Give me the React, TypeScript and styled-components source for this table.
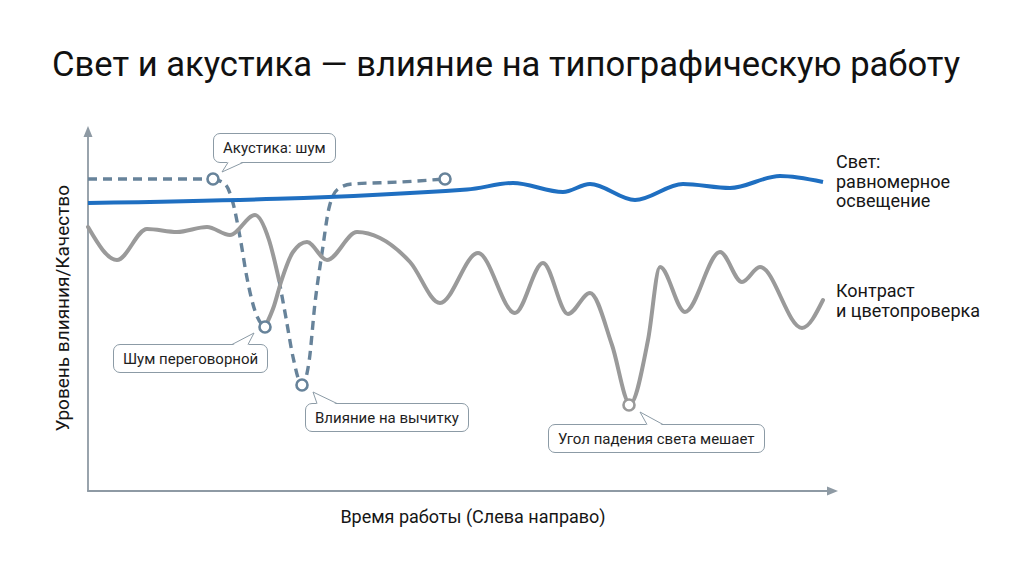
import React from 'react';
import styled, { createGlobalStyle } from 'styled-components';

const GlobalStyle = createGlobalStyle`
  html, body { margin: 0; padding: 0; background: #ffffff; }
  body { font-family: Roboto, "Noto Sans", "Liberation Sans", Arial, sans-serif; color: #151515; }
`;

type Pt = [number, number];

const sign = (v: number) => (v < 0 ? -1 : v > 0 ? 1 : 0);

function monotonePath(pts: Pt[]): string {
  const n = pts.length;
  if (n < 2) return '';
  const t: number[] = new Array(n).fill(0);
  for (let i = 1; i < n - 1; i++) {
    const [x0, y0] = pts[i - 1];
    const [x1, y1] = pts[i];
    const [x2, y2] = pts[i + 1];
    const h0 = x1 - x0;
    const h1 = x2 - x1;
    const s0 = (y1 - y0) / h0;
    const s1 = (y2 - y1) / h1;
    const p = (s0 * h1 + s1 * h0) / (h0 + h1);
    t[i] = (sign(s0) + sign(s1)) * Math.min(Math.abs(s0), Math.abs(s1), 0.5 * Math.abs(p)) || 0;
  }
  if (n > 2) {
    const a0 = pts[0];
    const a1 = pts[1];
    const h0 = a1[0] - a0[0];
    t[0] = h0 ? (3 * (a1[1] - a0[1]) / h0 - t[1]) / 2 : t[1];
    const b0 = pts[n - 2];
    const b1 = pts[n - 1];
    const h1 = b1[0] - b0[0];
    t[n - 1] = h1 ? (3 * (b1[1] - b0[1]) / h1 - t[n - 2]) / 2 : t[n - 2];
  } else {
    const s = (pts[1][1] - pts[0][1]) / (pts[1][0] - pts[0][0]);
    t[0] = s;
    t[1] = s;
  }
  let d = `M${pts[0][0]},${pts[0][1]}`;
  for (let i = 0; i < n - 1; i++) {
    const [x0, y0] = pts[i];
    const [x1, y1] = pts[i + 1];
    const dx = (x1 - x0) / 3;
    d += ` C${(x0 + dx).toFixed(2)},${(y0 + t[i] * dx).toFixed(2)} ${(x1 - dx).toFixed(2)},${(y1 - t[i + 1] * dx).toFixed(2)} ${x1},${y1}`;
  }
  return d;
}

const COLORS = {
  axis: '#8e9aa4',
  blue: '#1f6fc1',
  grey: '#9a9a9a',
  slate: '#67839a',
  border: '#8c9ba6',
};

const bluePts: Pt[] = [
  [88, 203], [467, 189.5], [513, 183], [563, 192], [590, 184], [635, 200],
  [683, 184], [730, 188], [780, 176], [823, 182],
];

const greyPart1: Pt[] = [
  [88, 227], [117, 260], [147, 229], [177, 232], [207, 227], [230, 235],
  [255, 215], [269, 240], [279, 280],
];

const greyPart2: Pt[] = [
  [265, 327], [274, 306], [281, 282], [293, 252], [307, 242], [327, 260],
  [357, 232], [380, 238], [410, 262], [440, 303], [478, 253], [515, 313],
  [543, 263], [568, 314], [590, 293], [612, 345], [630, 404], [648, 340],
  [660, 267], [685, 312], [720, 252], [742, 282], [760, 267], [802, 328],
  [823, 300],
];

const dashDive1: Pt[] = [
  [213, 179], [225, 184], [233, 203], [240, 237], [247, 278], [255, 311], [264, 327],
];

const dashDive2: Pt[] = [
  [279, 280], [286, 318], [293, 357], [302, 385], [309, 362], [315, 303],
  [322, 253], [329, 208], [338, 189], [352, 184], [400, 182], [445, 179],
];

const Page = styled.div`
  width: 1024px;
  height: 572px;
  overflow: hidden;
  display: flex;
  flex-direction: column;
`;

const Title = styled.h1`
  margin: 0;
  padding: 44px 0 0 52px;
  font-size: 34.6px;
  line-height: 40px;
  font-weight: 400;
  color: #111111;
  white-space: nowrap;
`;

const Figure = styled.figure`
  margin: 28px 0 0 0;
  display: flex;
  flex-direction: column;
`;

const PlotRow = styled.div`
  display: grid;
  grid-template-columns: 88px 936px;
  height: 392px;
`;

const YAxisCell = styled.div`
  display: flex;
  align-items: center;
  justify-content: flex-end;
  padding-right: 14px;
`;

const YAxisLabel = styled.span`
  writing-mode: vertical-rl;
  transform: rotate(180deg);
  font-size: 19px;
  line-height: 22px;
  white-space: nowrap;
  color: #161616;
`;

const Canvas = styled.div`
  position: relative;
  width: 936px;
  height: 392px;
`;

const ChartSvg = styled.svg`
  display: block;
  width: 936px;
  height: 392px;
  overflow: visible;
`;

const XAxisLabel = styled.figcaption`
  margin: 3px 0 0 88px;
  width: 770px;
  text-align: center;
  font-size: 18px;
  line-height: 20px;
  color: #161616;
`;

const CalloutBox = styled.div<{ $left: number; $top: number; $h: number }>`
  position: absolute;
  left: ${(p) => p.$left}px;
  top: ${(p) => p.$top}px;
  height: ${(p) => p.$h}px;
  box-sizing: border-box;
  display: flex;
  align-items: center;
  padding: 0 9px;
  border: 1px solid ${COLORS.border};
  border-radius: 7px;
  background: #ffffff;
  font-size: 15px;
  line-height: 18px;
  color: #1e1e1e;
  white-space: nowrap;
`;

const TailSvg = styled.svg`
  position: absolute;
  left: -1px;
  top: -1px;
  width: 1px;
  height: 1px;
  overflow: visible;
  pointer-events: none;
`;

const LegendLabel = styled.div<{ $left: number; $top: number }>`
  position: absolute;
  left: ${(p) => p.$left}px;
  top: ${(p) => p.$top}px;
  font-size: 18px;
  line-height: 19.5px;
  color: #161616;
  white-space: nowrap;
`;

const ORIGIN_X = 88;
const ORIGIN_Y = 112;

type CalloutSpec = {
  text: string;
  x: number;
  y: number;
  h: number;
  side: 'top' | 'bottom';
  b1: number;
  b2: number;
  tip: Pt;
};

const callouts: CalloutSpec[] = [
  { text: 'Акустика: шум', x: 213, y: 133, h: 30, side: 'bottom', b1: 15, b2: 30, tip: [9, 39] },
  { text: 'Шум переговорной', x: 113, y: 344, h: 29, side: 'top', b1: 119, b2: 135, tip: [141, -11] },
  { text: 'Влияние на вычитку', x: 305, y: 403, h: 29, side: 'top', b1: 12, b2: 32, tip: [8, -11] },
  { text: 'Угол падения света мешает', x: 548, y: 424, h: 29, side: 'top', b1: 99, b2: 115, tip: [92, -12] },
];

const Callout: React.FC<{ spec: CalloutSpec }> = ({ spec }) => {
  const edge = spec.side === 'top' ? 0.5 : spec.h - 0.5;
  const inner = spec.side === 'top' ? 1.6 : spec.h - 1.6;
  const [tx, ty] = spec.tip;
  return (
    <CalloutBox $left={spec.x - ORIGIN_X} $top={spec.y - ORIGIN_Y} $h={spec.h}>
      {spec.text}
      <TailSvg>
        <polygon points={`${spec.b1},${inner} ${tx},${ty} ${spec.b2},${inner}`} fill="#ffffff" />
        <polyline
          points={`${spec.b1},${edge} ${tx},${ty} ${spec.b2},${edge}`}
          fill="none"
          stroke={COLORS.border}
          strokeWidth={1}
          strokeLinejoin="round"
        />
      </TailSvg>
    </CalloutBox>
  );
};

const Marker: React.FC<{ x: number; y: number; color: string }> = ({ x, y, color }) => (
  <circle cx={x} cy={y} r={5.5} fill="#ffffff" stroke={color} strokeWidth={2.6} />
);

export default function App() {
  return (
    <>
      <GlobalStyle />
      <Page>
        <Title>Свет и акустика — влияние на типографическую работу</Title>
        <Figure>
          <PlotRow>
            <YAxisCell>
              <YAxisLabel>Уровень влияния/Качество</YAxisLabel>
            </YAxisCell>
            <Canvas>
              <ChartSvg viewBox={`${ORIGIN_X} ${ORIGIN_Y} 936 392`}>
                <line x1={88} y1={136} x2={88} y2={491} stroke={COLORS.axis} strokeWidth={1.8} />
                <polygon points="88,126 83.5,137 92.5,137" fill={COLORS.axis} />
                <line x1={87.1} y1={491} x2={828} y2={491} stroke={COLORS.axis} strokeWidth={1.8} />
                <polygon points="838,491 827,486.5 827,495.5" fill={COLORS.axis} />

                <g fill="none" stroke={COLORS.slate} strokeWidth={3.4} strokeDasharray="9 6">
                  <path d="M88,179 L207,179" />
                  <path d={monotonePath(dashDive1)} />
                  <path d={monotonePath(dashDive2)} />
                </g>

                <g fill="none" stroke={COLORS.grey} strokeWidth={4} strokeLinecap="round" strokeLinejoin="round">
                  <path d={monotonePath(greyPart1)} />
                  <path d={monotonePath(greyPart2)} />
                </g>

                <path
                  d={monotonePath(bluePts)}
                  fill="none"
                  stroke={COLORS.blue}
                  strokeWidth={4}
                  strokeLinecap="butt"
                />

                <Marker x={213} y={179} color={COLORS.slate} />
                <Marker x={445} y={179} color={COLORS.slate} />
                <Marker x={265} y={327} color={COLORS.slate} />
                <Marker x={302} y={385} color={COLORS.slate} />
                <Marker x={629} y={405} color={COLORS.grey} />
              </ChartSvg>

              {callouts.map((c) => (
                <Callout key={c.text} spec={c} />
              ))}

              <LegendLabel $left={836 - ORIGIN_X} $top={152 - ORIGIN_Y}>
                Свет:
                <br />
                равномерное
                <br />
                освещение
              </LegendLabel>
              <LegendLabel $left={836 - ORIGIN_X} $top={281 - ORIGIN_Y}>
                Контраст
                <br />и цветопроверка
              </LegendLabel>
            </Canvas>
          </PlotRow>
          <XAxisLabel>Время работы (Слева направо)</XAxisLabel>
        </Figure>
      </Page>
    </>
  );
}
